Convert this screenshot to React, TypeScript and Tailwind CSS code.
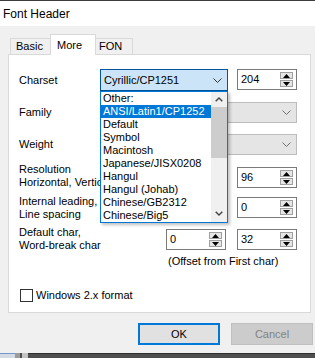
import React from "react";

const Up = () => (
  <svg width="7" height="4" viewBox="0 0 7 4">
    <path d="M0 4L3.5 0L7 4Z" fill="#000" />
  </svg>
);
const Down = () => (
  <svg width="7" height="4" viewBox="0 0 7 4">
    <path d="M0 0L3.5 4L7 0Z" fill="#000" />
  </svg>
);

const Chevron = ({ color = "#333" }: { color?: string }) => (
  <svg width="9" height="5" viewBox="0 0 9 5">
    <path d="M0.5 0.5L4.5 4.5L8.5 0.5" stroke={color} strokeWidth="1" fill="none" />
  </svg>
);

function Spin({ value, className = "" }: { value: string; className?: string }) {
  return (
    <div
      className={`h-[21px] w-[60px] shrink-0 border border-[#7a7a7a] bg-white flex items-center pl-[3px] pr-[3px] ${className}`}
    >
      <span className="flex-1 leading-[13px]">{value}</span>
      <div className="flex flex-col gap-[1px]">
        <div className="w-[13px] h-[7px] border border-[#a0a0a0] bg-[#e6e6e6] flex items-center justify-center">
          <Up />
        </div>
        <div className="w-[13px] h-[7px] border border-[#a0a0a0] bg-[#e6e6e6] flex items-center justify-center">
          <Down />
        </div>
      </div>
    </div>
  );
}

function DisabledCombo() {
  return (
    <div className="flex-1 h-[21px] border border-[#bcbcbc] bg-[#e5e5e5] flex items-center justify-end pr-[5px]">
      <Chevron color="#707070" />
    </div>
  );
}

export default function App() {
  const items = [
    "Other:",
    "ANSI/Latin1/CP1252",
    "Default",
    "Symbol",
    "Macintosh",
    "Japanese/JISX0208",
    "Hangul",
    "Hangul (Johab)",
    "Chinese/GB2312",
    "Chinese/Big5",
  ];
  return (
    <div className="w-[315px] h-[358px] flex flex-col overflow-hidden text-[11px] text-black font-['Liberation_Sans',Arial,sans-serif]">
      <div className="h-px bg-[#3c3c3c]" />
      <div className="h-[25px] bg-white flex items-center pl-[3px] text-[12px]">Font Header</div>
      <div className="flex-1 bg-[#f0f0f0] flex flex-col">
        <div className="flex items-end pt-[8px] pl-[10px]">
          <div className="w-[40px] h-[16px] border-l border-t border-[#d9d9d9] flex items-center pl-[5px]">
            Basic
          </div>
          <div className="relative z-10 -mb-px w-[46px] h-[21px] border-l border-t border-r border-[#d9d9d9] bg-white flex items-center pl-[6px]">
            More
          </div>
          <div className="w-[37px] h-[16px] border-t border-r border-[#d9d9d9] flex items-center pl-[3px]">
            FON
          </div>
        </div>
        <div className="ml-[8px] w-[303px] h-[259px] border border-[#d9d9d9] bg-white flex flex-col">
          <div className="mt-[14px] flex items-start pl-[10px] pr-[13px]">
            <div className="w-[81px] h-[22px] flex items-center">Charset</div>
            <div className="relative w-[128px] h-[22px] border border-[#005499] bg-[#cce4f7] flex items-center justify-between pl-[3px] pr-[5px]">
              <span>Cyrillic/CP1251</span>
              <Chevron />
              <div className="absolute left-[-1px] top-[21px] z-20 w-[128px] h-[132px] border border-[#0078d7] bg-white flex overflow-hidden shadow-[2px_2px_3px_rgba(0,0,0,0.25)]">
                <div className="w-[110px] flex flex-col">
                  {items.map((it, i) => (
                    <div
                      key={it}
                      className={
                        i === 1
                          ? "h-[13px] leading-[13px] pl-[2px] whitespace-nowrap bg-[#0078d7] text-white"
                          : "h-[13px] leading-[13px] pl-[2px] whitespace-nowrap"
                      }
                    >
                      {it}
                    </div>
                  ))}
                </div>
                <div className="w-[16px] bg-[#f0f0f0] flex flex-col">
                  <div className="h-[15px] flex items-center justify-center">
                    <svg width="8" height="5" viewBox="0 0 8 5">
                      <path d="M0.7 4.3L4 1L7.3 4.3" stroke="#444" strokeWidth="1.4" fill="none" />
                    </svg>
                  </div>
                  <div className="h-[51px] bg-[#cdcdcd]" />
                  <div className="flex-1" />
                  <div className="h-[18px] flex items-center justify-center">
                    <svg width="8" height="5" viewBox="0 0 8 5">
                      <path d="M0.7 0.7L4 4L7.3 0.7" stroke="#444" strokeWidth="1.4" fill="none" />
                    </svg>
                  </div>
                </div>
              </div>
            </div>
            <Spin value="204" className="ml-auto" />
          </div>

          <div className="mt-[11px] flex items-center pl-[10px] pr-[13px] h-[21px]">
            <div className="w-[81px]">Family</div>
            <DisabledCombo />
          </div>

          <div className="mt-[11px] flex items-center pl-[10px] pr-[13px] h-[21px]">
            <div className="w-[81px]">Weight</div>
            <DisabledCombo />
          </div>

          <div className="mt-[8px] flex items-start pl-[10px] pr-[13px]">
            <div className="w-[81px] overflow-hidden leading-[13px] whitespace-nowrap">
              Resolution
              <br />
              Horizontal, Vertical
            </div>
            <Spin value="96" className="mt-[4px] ml-auto" />
          </div>

          <div className="mt-[6px] flex items-start pl-[10px] pr-[13px]">
            <div className="w-[81px] overflow-hidden leading-[13px] whitespace-nowrap">
              Internal leading,
              <br />
              Line spacing
            </div>
            <Spin value="0" className="mt-[2px] ml-auto" />
          </div>

          <div className="mt-[5px] flex items-start pl-[10px] pr-[13px]">
            <div className="w-[147px] leading-[13px] whitespace-nowrap">
              Default char,
              <br />
              Word-break char
            </div>
            <Spin value="0" className="mt-[3px]" />
            <Spin value="32" className="mt-[3px] ml-[11px]" />
          </div>

          <div className="mt-[3px] pl-[159px] leading-[13px]">(Offset from First char)</div>

          <div className="mt-[21px] flex items-center pl-[11px]">
            <div className="w-[13px] h-[13px] border border-[#333333] bg-white" />
            <span className="ml-[3px] leading-[13px]">Windows 2.x format</span>
          </div>
        </div>

        <div className="mt-[10px] flex pl-[138px]">
          <div className="w-[82px] h-[22px] border-2 border-[#0078d7] bg-[#e1e1e1] flex items-center justify-center">
            OK
          </div>
          <div className="ml-[11px] w-[82px] h-[22px] border border-[#bfbfbf] bg-[#cccccc] text-[#838383] flex items-center justify-center">
            Cancel
          </div>
        </div>
      </div>
      <div className="h-[5px] flex">
        <div className="w-[15px] bg-[#d4dbe4] border-t border-[#6f98d0]" />
        <div className="w-[5px] bg-[#9c9c9c]" />
        <div className="w-[2px] bg-[#505050]" />
        <div className="w-[6px] bg-[#c4c4c4]" />
        <div className="flex-1 bg-[#4e4e4e] border-t border-[#2e2e2e]" />
      </div>
    </div>
  );
}
